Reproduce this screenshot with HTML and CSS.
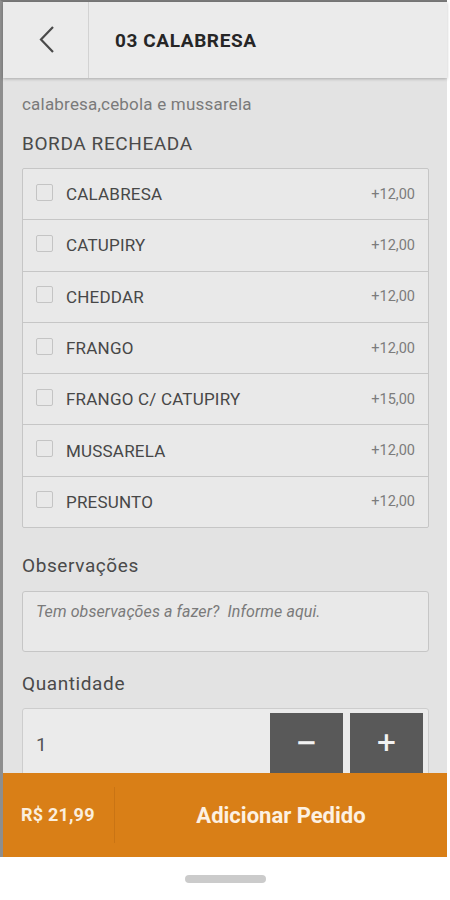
FILE: index.html
```html
<!DOCTYPE html>
<html>

<head>
  <title>03 Calabresa</title>
  <meta charset="utf-8">
  <link rel="stylesheet" href="styles.css">
</head>

<body>
  <div class="screen">
    <div class="header">
      <a href="#" class="back-button">
        <svg width="20" height="30" viewBox="0 0 20 30">
          <polyline points="15,2 3,14.5 15,27" fill="none" stroke="#4a4a4a" stroke-width="2.2" />
        </svg>
      </a>
      <h1 class="title">03 CALABRESA</h1>
    </div>

    <div class="content">
      <p class="description">calabresa,cebola e mussarela</p>
      <h2 class="section-title">BORDA RECHEADA</h2>

      <div class="option-list">
        <label class="option">
          <input type="checkbox"><span class="check"></span>
          <span class="option-name">CALABRESA</span>
          <span class="option-price">+12,00</span>
        </label>
        <label class="option">
          <input type="checkbox"><span class="check"></span>
          <span class="option-name">CATUPIRY</span>
          <span class="option-price">+12,00</span>
        </label>
        <label class="option">
          <input type="checkbox"><span class="check"></span>
          <span class="option-name">CHEDDAR</span>
          <span class="option-price">+12,00</span>
        </label>
        <label class="option">
          <input type="checkbox"><span class="check"></span>
          <span class="option-name">FRANGO</span>
          <span class="option-price">+12,00</span>
        </label>
        <label class="option">
          <input type="checkbox"><span class="check"></span>
          <span class="option-name">FRANGO C/ CATUPIRY</span>
          <span class="option-price">+15,00</span>
        </label>
        <label class="option">
          <input type="checkbox"><span class="check"></span>
          <span class="option-name">MUSSARELA</span>
          <span class="option-price">+12,00</span>
        </label>
        <label class="option">
          <input type="checkbox"><span class="check"></span>
          <span class="option-name">PRESUNTO</span>
          <span class="option-price">+12,00</span>
        </label>
      </div>

      <h3 class="field-label obs-label">Observações</h3>
      <textarea class="obs-input" placeholder="Tem observações a fazer?  Informe aqui."></textarea>

      <h3 class="field-label qty-label">Quantidade</h3>
      <div class="qty-box">
        <span class="qty-value" id="qtyValue">1</span>
        <button class="qty-btn" onclick="changeQty(-1)">&minus;</button>
        <button class="qty-btn" onclick="changeQty(1)">+</button>
      </div>
    </div>

    <div class="order-bar">
      <span class="order-total">R$ 21,99</span>
      <button class="order-button">Adicionar Pedido</button>
    </div>
  </div>

  <div class="nav-bar">
    <span class="home-pill"></span>
  </div>

  <script>
    function changeQty(step) {
      var qtyValue = document.getElementById("qtyValue");
      var qty = parseInt(qtyValue.textContent) + step;
      if (qty < 1) {
        qty = 1;
      }
      qtyValue.textContent = qty;
    }
  </script>
</body>

</html>
```

FILE: styles.css
```css
body {
  font-family: Roboto, "Liberation Sans", Arial, sans-serif;
  margin: 0;
  padding: 0;
  background-color: #ffffff;
  width: 450px;
  height: 900px;
  overflow: hidden;
}

.screen {
  width: 444px;
  height: 855px;
  border-top: 2px solid #7a7a7a;
  border-left: 3px solid #8e8e8e;
  background-color: #e3e3e3;
  display: flex;
  flex-direction: column;
}

/* Header */
.header {
  height: 76px;
  flex-shrink: 0;
  display: flex;
  align-items: stretch;
  background-color: #ebebeb;
  box-shadow: 0 1px 3px rgba(0, 0, 0, 0.25);
  position: relative;
  z-index: 1;
}

.back-button {
  width: 86px;
  border-right: 1px solid #d2d2d2;
  display: flex;
  align-items: center;
  padding-left: 35px;
  box-sizing: border-box;
}

.title {
  margin: 0;
  padding-left: 26px;
  display: flex;
  align-items: center;
  font-size: 19px;
  font-weight: bold;
  color: #262626;
  letter-spacing: 0.6px;
}

/* Content */
.content {
  flex: 1;
  overflow: hidden;
  padding: 16px 18px 0 19px;
}

.description {
  margin: 0;
  font-size: 17px;
  line-height: 20px;
  color: #7a7a7a;
  letter-spacing: 0.2px;
}

.section-title {
  margin: 20px 0 0;
  font-size: 19px;
  line-height: 20px;
  font-weight: normal;
  color: #4a4a4a;
  letter-spacing: 0.6px;
}

.option-list {
  margin-top: 14px;
  border: 1px solid #c6c6c6;
  border-radius: 2px;
  background-color: #e9e9e9;
}

.option {
  height: 50.3px;
  display: flex;
  align-items: center;
  padding: 0 13px 0 13px;
  border-bottom: 1px solid #c6c6c6;
  cursor: pointer;
}

.option:last-child {
  border-bottom: none;
}

.option input {
  display: none;
}

.check {
  width: 17px;
  height: 17px;
  border: 1px solid #c4c4c4;
  border-radius: 2px;
  margin-top: -4px;
  box-sizing: border-box;
}

.option input:checked + .check {
  background-color: #d97f17;
  border-color: #d97f17;
}

.option-name {
  flex: 1;
  margin-left: 13px;
  font-size: 17px;
  color: #474747;
  letter-spacing: 0.2px;
}

.option-price {
  font-size: 14.5px;
  color: #7c7c7c;
}

.field-label {
  margin: 0;
  font-size: 19px;
  line-height: 20px;
  font-weight: normal;
  color: #4a4a4a;
  letter-spacing: 0.6px;
}

.obs-label {
  margin-top: 28px;
}

.obs-input {
  display: block;
  width: 100%;
  height: 61px;
  margin-top: 15px;
  box-sizing: border-box;
  border: 1px solid #c6c6c6;
  border-radius: 3px;
  background-color: #e9e9e9;
  padding: 10px 13px;
  resize: none;
  font-family: Roboto, "Liberation Sans", Arial, sans-serif;
  font-size: 16px;
  letter-spacing: 0.1px;
  outline: none;
}

.obs-input::placeholder {
  font-style: italic;
  color: #7a7a7a;
}

.qty-label {
  margin-top: 22px;
}

.qty-box {
  margin-top: 14px;
  height: 72px;
  box-sizing: border-box;
  border: 1px solid #cdcdcd;
  border-radius: 3px;
  background-color: #ebebeb;
  display: flex;
  align-items: flex-start;
  gap: 7px;
  padding: 4px 5px 0 13px;
}

.qty-value {
  flex: 1;
  font-size: 19px;
  color: #555;
  padding-top: 20px;
}

.qty-btn {
  width: 73px;
  height: 66px;
  border: none;
  background-color: #595959;
  color: #f2f2f2;
  font-size: 26px;
  font-weight: bold;
  font-family: "DejaVu Sans", sans-serif;
  padding: 0 0 8px;
  cursor: pointer;
}

/* Bottom bar */
.order-bar {
  height: 84px;
  flex-shrink: 0;
  display: flex;
  align-items: center;
  background-color: #d97f17;
  position: relative;
  z-index: 1;
}

.order-total {
  width: 112px;
  padding-left: 18px;
  box-sizing: border-box;
  font-size: 18px;
  font-weight: bold;
  color: #fbeedd;
  border-right: 1px solid #c97414;
  height: 56px;
  line-height: 56px;
  letter-spacing: 0.2px;
}

.order-button {
  flex: 1;
  height: 84px;
  border: none;
  background: none;
  font-family: Roboto, "Liberation Sans", Arial, sans-serif;
  font-size: 22px;
  font-weight: bold;
  color: #fdf1e2;
  cursor: pointer;
}

/* Navigation area */
.nav-bar {
  height: 43px;
  display: flex;
  justify-content: center;
  align-items: center;
}

.home-pill {
  width: 81px;
  height: 8px;
  border-radius: 4px;
  background-color: #cbcbcb;
  margin-left: 1px;
}
```
